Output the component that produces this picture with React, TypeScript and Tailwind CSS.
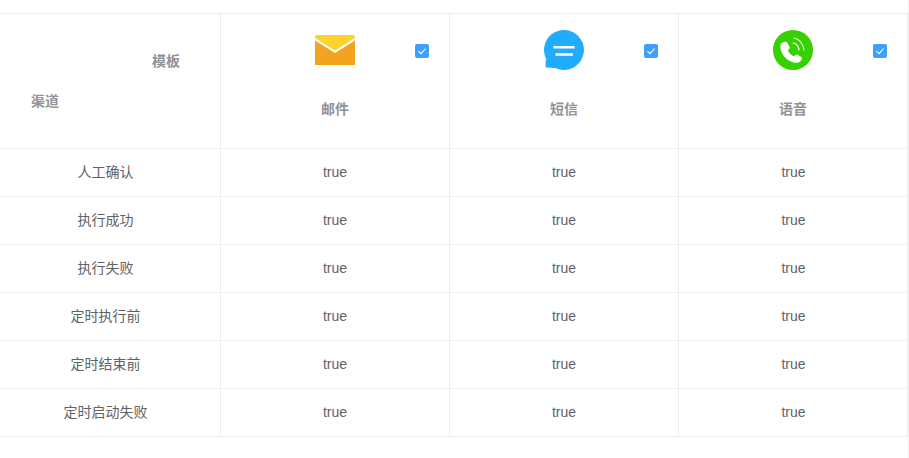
const FONT = "font-['Liberation_Sans','Noto_Sans_CJK_SC',sans-serif]";

function Mail() {
  return (
    <svg width="40" height="30" viewBox="0 0 40 30" className="block">
      <path d="M0 5.500L20 18L40 5.500V30H0Z" fill="#f3a31e" />
      <path d="M1.500 0H38.500L40 1V3L20 15.500L0 3V1Z" fill="#ffd22e" />
    </svg>
  );
}

function Sms() {
  return (
    <svg width="40" height="40" viewBox="0 0 40 40" className="block">
      <path d="M2.800 30.200A20 20 0 1 1 12 38.300C9 37.800 6 37.600 3 37.600C2 37.600 1.700 37.200 1.700 36.400V29Z" fill="#22acfd" />
      <rect x="9.500" y="16" width="21" height="2.500" rx="0.500" fill="#fff" />
      <rect x="11.500" y="23.200" width="17.500" height="2.500" rx="0.500" fill="#fff" />
    </svg>
  );
}

function Phone() {
  return (
    <svg width="40" height="40" viewBox="0 0 40 40" className="block">
      <circle cx="20" cy="20" r="20" fill="#36d100" />
      <path
        d="M7.500 15C8 13 10 12 12 11.800C13 11.700 14 12 14.500 13L16.500 16.800C17 17.800 16.800 18.500 16 19.200L14.800 20.200C15.800 22.500 18 25 20.800 26.200L22.300 25C23 24.400 23.900 24.300 24.700 24.800L28 26.800C29 27.500 29.200 28.500 28.700 29.500C27.800 31.200 26 32.800 24 32.800C15 32.800 6.500 24 7.500 15Z"
        fill="#fff"
      />
      <path d="M20 13C23 13.500 25.500 16 26 20" fill="none" stroke="#fff" strokeWidth="1.200" strokeLinecap="round" />
      <path d="M21 8C26 9 30 13.500 31 20" fill="none" stroke="#fff" strokeWidth="1.100" strokeLinecap="round" />
    </svg>
  );
}

function Check() {
  return (
    <span className="flex h-[14px] w-[14px] items-center justify-center rounded-[2px] bg-[#409eff]">
      <svg width="14" height="14" viewBox="0 0 14 14" className="block">
        <path d="M3.500 7.200L6 9.700L10.700 4.500" fill="none" stroke="#fff" strokeWidth="1.100" />
      </svg>
    </span>
  );
}

const channels = [
  { name: "邮件", icon: <Mail />, h: "h-[40px] pt-[5px]" },
  { name: "短信", icon: <Sms />, h: "h-[40px]" },
  { name: "语音", icon: <Phone />, h: "h-[40px]" },
];

const rows = ["人工确认", "执行成功", "执行失败", "定时执行前", "定时结束前", "定时启动失败"];

export default function App() {
  return (
    <div className={`h-[458px] w-[909px] overflow-hidden border-r border-r-[#f2f2f2] bg-white pt-[13px] ${FONT}`}>
      <div className="h-[424px] border-r border-r-[#ebeef5]">
        <div className="grid grid-cols-[221px_229px_229px_229px] border-t border-t-[#ebeef5] text-sm">
          <div className="h-[135px] border-r border-b border-[#ebeef5] font-bold text-[#909399]">
            <div className="pt-[37px] pr-10 text-right leading-5">模板</div>
            <div className="pt-5 pl-[31px] leading-5">渠道</div>
          </div>
          {channels.map((c) => (
            <div key={c.name} className="h-[135px] border-r border-b border-[#ebeef5] last:border-r-0">
              <div className="grid grid-cols-[1fr_auto_1fr] items-start pt-4">
                <div />
                <div className={c.h}>{c.icon}</div>
                <div className="flex justify-end pt-[14px] pr-5">
                  <Check />
                </div>
              </div>
              <div className="pt-[29px] text-center leading-5 font-bold text-[#909399]">{c.name}</div>
            </div>
          ))}
          {rows.map((r) => (
            <div key={r} className="contents">
              <div className="flex h-[48px] items-center justify-center border-r border-b border-[#ebeef5] pr-[9px] pb-[2px] text-[#606266]">{r}</div>
              {channels.map((c) => (
                <div key={c.name} className="flex h-[48px] items-center justify-center border-r border-b border-[#ebeef5] pb-[2px] text-[#606266] last:border-r-0">
                  true
                </div>
              ))}
            </div>
          ))}
        </div>
      </div>
    </div>
  );
}
